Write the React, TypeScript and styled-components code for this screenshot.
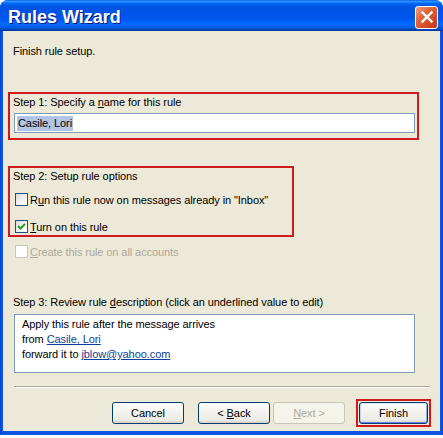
import React from "react";
import styled, { createGlobalStyle } from "styled-components";

const Global = createGlobalStyle`
  html, body { margin: 0; padding: 0; background: #ffffff; }
  body { font-family: "Liberation Sans", Arial, sans-serif; font-size: 11px; letter-spacing: -0.08px; color: #000; }
`;

const Window = styled.div`
  width: 443px;
  height: 435px;
  display: flex;
  flex-direction: column;
  border-radius: 8px 8px 0 0;
  overflow: hidden;
  background: linear-gradient(to right, #0a3fcf 0px, #0b55e6 2px, #0b55e6 441px, #0a3fcf 443px);
`;

const TitleBar = styled.div`
  height: 31px;
  flex: none;
  box-sizing: border-box;
  display: flex;
  align-items: center;
  justify-content: space-between;
  padding: 3px 5px 0 8px;
  background: linear-gradient(
    to bottom,
    #0058ee 0%,
    #3593ff 4%,
    #288eff 6%,
    #127dff 8%,
    #036ffc 10%,
    #0262ee 14%,
    #0057e5 20%,
    #0054e3 24%,
    #0055eb 56%,
    #005bf5 66%,
    #026afe 76%,
    #0062ef 86%,
    #0052d6 92%,
    #0040ab 97%,
    #003092 100%
  );
`;

const Title = styled.div`
  font-family: "Liberation Sans", Arial, sans-serif;
  font-weight: bold;
  font-size: 18px;
  letter-spacing: 0;
  color: #ffffff;
  text-shadow: 1px 1px 0 #0a1883;
`;

const CloseButton = styled.div`
  width: 23px;
  height: 23px;
  box-sizing: border-box;
  border: 1px solid #ffffff;
  border-radius: 3px;
  background: linear-gradient(135deg, #f2a07e 0%, #e2673f 35%, #d24a27 70%, #c03a1a 100%);
  display: flex;
  align-items: center;
  justify-content: center;
`;

const Body = styled.div`
  flex: 1;
  margin: 0 3px 4px 3px;
  background: #ece9d8;
  display: flex;
  flex-direction: column;
  padding-left: 5px;
`;

const Intro = styled.div`
  margin: 14px 0 0 5px;
  line-height: 13px;
`;

const StepBox = styled.div<{ $width: number; $top: number; $bottom: number }>`
  box-sizing: border-box;
  width: ${(p) => p.$width}px;
  margin-top: ${(p) => p.$top}px;
  border: 2px solid #cf1b1b;
  padding: 2px 0 ${(p) => p.$bottom}px 3px;
  display: flex;
  flex-direction: column;
`;

const Label = styled.div<{ $top?: number; $left?: number }>`
  line-height: 13px;
  margin-top: ${(p) => p.$top ?? 0}px;
  margin-left: ${(p) => p.$left ?? 0}px;
  white-space: nowrap;
`;

const Key = styled.span`
  text-decoration: underline;
`;

const TextBox = styled.div`
  box-sizing: border-box;
  width: 401px;
  height: 20px;
  margin: 4px 0 0 1px;
  border: 1px solid #7f9db9;
  background: #ffffff;
  display: flex;
  align-items: center;
  padding-left: 2px;
`;

const Selected = styled.span`
  background: #b2c5e5;
  line-height: 15px;
  padding: 0 1px;
`;

const CheckRow = styled.div<{ $top: number; $left: number; $disabled?: boolean }>`
  display: flex;
  align-items: center;
  gap: 2px;
  height: 13px;
  margin-top: ${(p) => p.$top}px;
  margin-left: ${(p) => p.$left}px;
  color: ${(p) => (p.$disabled ? "#aca899" : "#000")};
  white-space: nowrap;
`;

const Box = styled.span<{ $disabled?: boolean }>`
  box-sizing: border-box;
  width: 13px;
  height: 13px;
  flex: none;
  border: 1px solid ${(p) => (p.$disabled ? "#cac8bb" : "#1c5180")};
  background: ${(p) =>
    p.$disabled ? "#ffffff" : "linear-gradient(135deg, #dcdcd7 0%, #f4f4f0 60%, #ffffff 100%)"};
  display: flex;
  align-items: center;
  justify-content: center;
`;

const Description = styled.div`
  box-sizing: border-box;
  width: 401px;
  height: 59px;
  margin: 5px 0 0 6px;
  border: 1px solid #7f9db9;
  background: #ffffff;
  padding: 2px 0 0 7px;
  line-height: 15px;
`;

const Link = styled.span`
  color: #0b3f9a;
  text-decoration: underline;
`;

const Separator = styled.div`
  width: 416px;
  height: 1px;
  margin: 13px 0 0 6px;
  background: #aca899;
  border-bottom: 1px solid #ffffff;
`;

const ButtonRow = styled.div`
  display: flex;
  align-items: center;
  justify-content: flex-end;
  height: 27px;
  margin-top: 11px;
  padding-right: 9px;
`;

const Button = styled.div<{ $gap: number; $disabled?: boolean; $width?: number }>`
  box-sizing: border-box;
  width: ${(p) => p.$width ?? 72}px;
  height: 22px;
  margin-right: ${(p) => p.$gap}px;
  border: 1px solid ${(p) => (p.$disabled ? "#c9c7ba" : "#003c74")};
  border-radius: 3px;
  background: ${(p) =>
    p.$disabled ? "#f5f4ea" : "linear-gradient(to bottom, #ffffff 0%, #f4f3ee 40%, #ecebe6 85%, #d6d0c5 100%)"};
  color: ${(p) => (p.$disabled ? "#aca899" : "#000")};
  display: flex;
  align-items: center;
  justify-content: center;
  white-space: pre;
`;

const DefaultWrap = styled.div`
  border: 2px solid #cf1b1b;
  padding: 1px;
  display: flex;
`;

const DefaultButton = styled(Button)`
  box-shadow: inset 0 1px 0 #cee7ff, inset 0 -1px 0 #6982ee, inset 1px 0 0 #bcd4f6, inset -1px 0 0 #89ade4;
`;

const CloseIcon = () => (
  <svg width="14" height="14" viewBox="0 0 14 14">
    <path d="M2.5 2.5 L11.5 11.5 M11.5 2.5 L2.5 11.5" stroke="#ffffff" strokeWidth="2.4" strokeLinecap="square" />
  </svg>
);

const CheckMark = () => (
  <svg width="9" height="9" viewBox="0 0 9 9">
    <path d="M1 4 L3.5 6.5 L8 2" stroke="#21a121" strokeWidth="2" fill="none" />
  </svg>
);

export default function App() {
  return (
    <>
      <Global />
      <Window>
        <TitleBar>
          <Title>Rules Wizard</Title>
          <CloseButton>
            <CloseIcon />
          </CloseButton>
        </TitleBar>
        <Body>
          <Intro>Finish rule setup.</Intro>

          <StepBox $width={411} $top={34} $bottom={5}>
            <Label>
              Step 1: Specify a <Key>n</Key>ame for this rule
            </Label>
            <TextBox>
              <Selected>Casile, Lori</Selected>
            </TextBox>
          </StepBox>

          <StepBox $width={286} $top={26} $bottom={2}>
            <Label>Step 2: Setup rule options</Label>
            <CheckRow $top={10} $left={2}>
              <Box />
              <span>
                R<Key>u</Key>n this rule now on messages already in "Inbox"
              </span>
            </CheckRow>
            <CheckRow $top={14} $left={2}>
              <Box>
                <CheckMark />
              </Box>
              <span>
                <Key>T</Key>urn on this rule
              </span>
            </CheckRow>
          </StepBox>

          <CheckRow $top={8} $left={7} $disabled>
            <Box $disabled />
            <span>
              <Key>C</Key>reate this rule on all accounts
            </span>
          </CheckRow>

          <Label $top={38} $left={5}>
            Step 3: Review rule <Key>d</Key>escription (click an underlined value to edit)
          </Label>
          <Description>
            <div>Apply this rule after the message arrives</div>
            <div>
              from <Link>Casile, Lori</Link>
            </div>
            <div>
              forward it to <Link>jblow@yahoo.com</Link>
            </div>
          </Description>

          <Separator />

          <ButtonRow>
            <Button $gap={14}>
              <span>Cancel</span>
            </Button>
            <Button $gap={3}>
              <span>
                {"< "}
                <Key>B</Key>ack
              </span>
            </Button>
            <Button $gap={11} $disabled>
              <span>
                <Key>N</Key>
                {"ext >"}
              </span>
            </Button>
            <DefaultWrap>
              <DefaultButton $gap={0} $width={69}>
                <span>Finish</span>
              </DefaultButton>
            </DefaultWrap>
          </ButtonRow>
        </Body>
      </Window>
    </>
  );
}
